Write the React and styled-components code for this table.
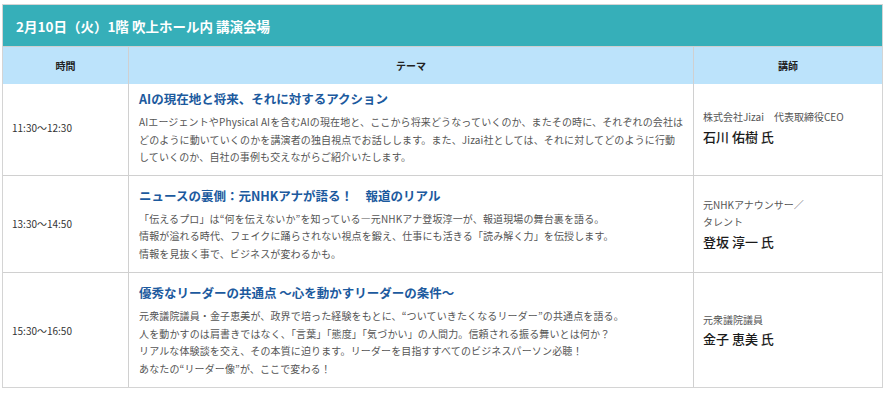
import React from "react";
import styled, { createGlobalStyle } from "styled-components";

const Global = createGlobalStyle`
  html, body { margin: 0; padding: 0; background: #fff; }
  body { font-family: "Noto Sans CJK JP", "Noto Sans", sans-serif; color: #333; }
`;

const Page = styled.div`
  padding: 4px 0 0 2px;
`;

const Table = styled.div`
  width: 881px;
  box-sizing: border-box;
  border: 1px solid #d4d4d4;
`;

const Caption = styled.div`
  height: 41px;
  background: #36afb9;
  border-bottom: 1px solid #cfcfcf;
  display: flex;
  align-items: center;
  padding-left: 13px;
  color: #fff;
  font-weight: 700;
  font-size: 13.5px;
`;

const Row = styled.div`
  display: grid;
  grid-template-columns: 126px 565px 1fr;
  border-top: ${p => (p.$head || p.$first ? "none" : "1px solid #d0d0d0")};
  background: ${p => (p.$head ? "#bce3fb" : "#fff")};
  & > * {
    padding-top: ${p => (p.$head ? 0 : p.$first ? 5 : 10)}px;
    padding-bottom: ${p => (p.$head ? 0 : p.$first ? 9 : 10)}px;
  }
`;

const HeadCell = styled.div`
  height: 37px;
  display: flex;
  align-items: center;
  justify-content: center;
  font-size: 10px;
  font-weight: 700;
  color: #222;
  border-right: ${p => (p.$last ? "none" : "1px solid #d0d0d0")};
`;

const Cell = styled.div`
  box-sizing: border-box;
  display: flex;
  flex-direction: column;
  justify-content: center;
  padding-left: ${p => p.$pl || 10}px;
  padding-right: 10px;
  border-right: ${p => (p.$last ? "none" : "1px solid #d0d0d0")};
`;

const Time = styled.div`
  font-size: 10px;
  color: #333;
`;

const Title = styled.div`
  font-size: 12.5px;
  line-height: 20px;
  font-weight: 700;
  color: #1c5a9e;
  margin-bottom: 4px;
  white-space: nowrap;
`;

const Desc = styled.div`
  font-size: 10px;
  line-height: 17.5px;
  letter-spacing: 0.13px;
  color: #555;
  white-space: nowrap;
`;

const Role = styled.div`
  font-size: 10px;
  line-height: 17.5px;
  color: #555;
`;

const Name = styled.div`
  font-size: 13px;
  line-height: 20px;
  font-weight: 500;
  color: #1a1a1a;
  margin-top: 1px;
`;

const sessions = [
  {
    time: "11:30〜12:30",
    title: "AIの現在地と将来、それに対するアクション",
    desc: [
      "AIエージェントやPhysical AIを含むAIの現在地と、ここから将来どうなっていくのか、またその時に、それぞれの会社は",
      "どのように動いていくのかを講演者の独自視点でお話しします。また、Jizai社としては、それに対してどのように行動",
      "していくのか、自社の事例も交えながらご紹介いたします。",
    ],
    role: ["株式会社Jizai　代表取締役CEO"],
    name: "石川 佑樹 氏",
  },
  {
    time: "13:30〜14:50",
    title: "ニュースの裏側：元NHKアナが語る！　報道のリアル",
    desc: [
      "「伝えるプロ」は“何を伝えないか”を知っている―元NHKアナ登坂淳一が、報道現場の舞台裏を語る。",
      "情報が溢れる時代、フェイクに踊らされない視点を鍛え、仕事にも活きる「読み解く力」を伝授します。",
      "情報を見抜く事で、ビジネスが変わるかも。",
    ],
    role: ["元NHKアナウンサー／", "タレント"],
    name: "登坂 淳一 氏",
  },
  {
    time: "15:30〜16:50",
    title: "優秀なリーダーの共通点 〜心を動かすリーダーの条件〜",
    desc: [
      "元衆議院議員・金子恵美が、政界で培った経験をもとに、“ついていきたくなるリーダー”の共通点を語る。",
      "人を動かすのは肩書きではなく、「言葉」「態度」「気づかい」の人間力。信頼される振る舞いとは何か？",
      "リアルな体験談を交え、その本質に迫ります。リーダーを目指すすべてのビジネスパーソン必聴！",
      "あなたの“リーダー像”が、ここで変わる！",
    ],
    role: ["元衆議院議員"],
    name: "金子 恵美 氏",
  },
];

export default function App() {
  return (
    <Page>
      <Global />
      <Table>
        <Caption>2月10日（火）1階 吹上ホール内 講演会場</Caption>
        <Row $head>
          <HeadCell>時間</HeadCell>
          <HeadCell>テーマ</HeadCell>
          <HeadCell $last>講師</HeadCell>
        </Row>
        {sessions.map((s, i) => (
          <Row key={s.time} $first={i === 0}>
            <Cell $pl={9}>
              <Time>{s.time}</Time>
            </Cell>
            <Cell>
              <Title>{s.title}</Title>
              {s.desc.map(d => (
                <Desc key={d}>{d}</Desc>
              ))}
            </Cell>
            <Cell $last $pl={9}>
              {s.role.map(r => (
                <Role key={r}>{r}</Role>
              ))}
              <Name>{s.name}</Name>
            </Cell>
          </Row>
        ))}
      </Table>
    </Page>
  );
}
